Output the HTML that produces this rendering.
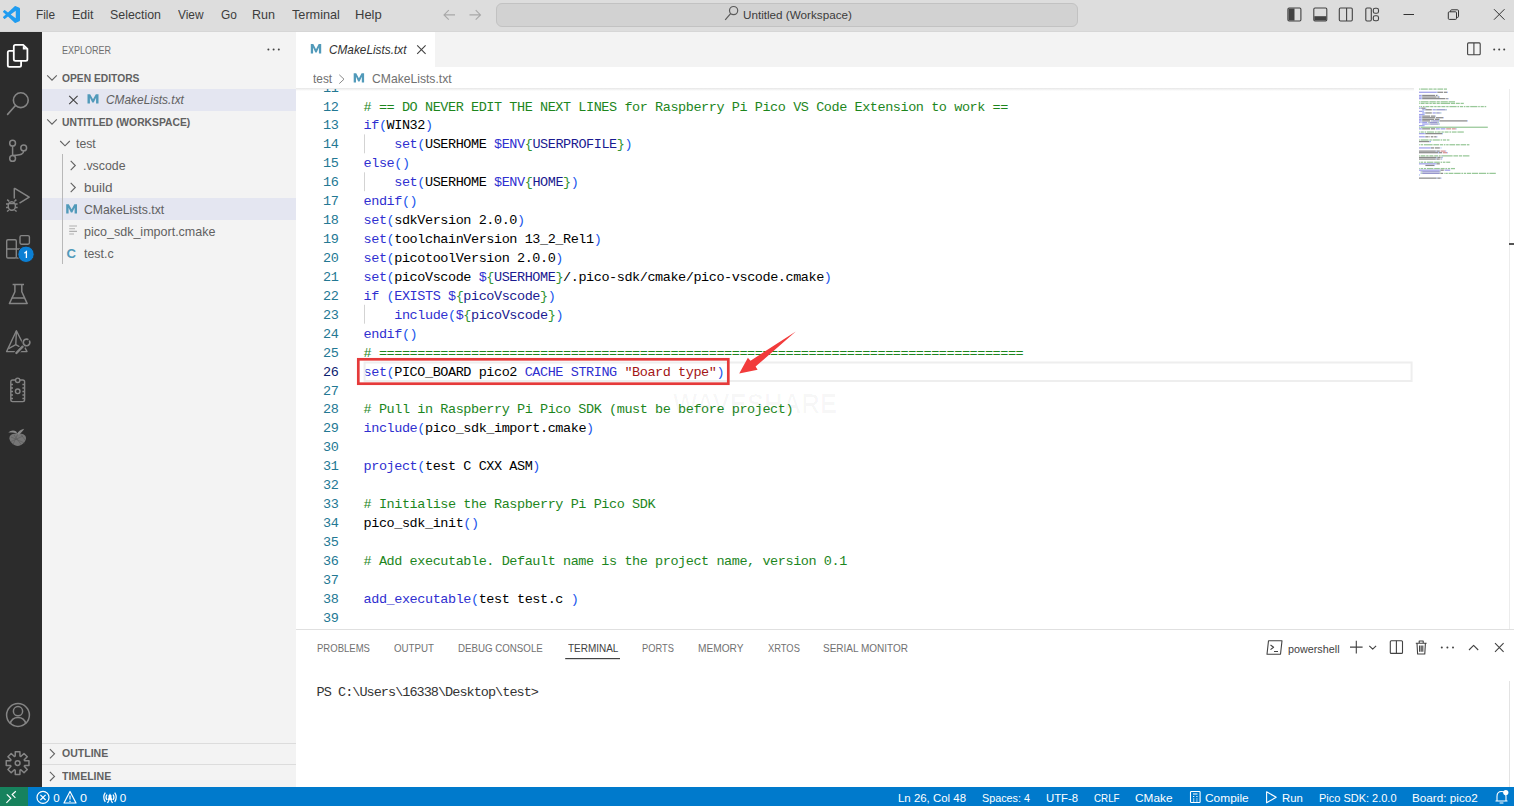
<!DOCTYPE html>
<html><head><meta charset="utf-8"><style>
*{margin:0;padding:0;box-sizing:border-box}
html,body{width:1514px;height:806px;overflow:hidden;background:#fff}
body{position:relative;font-family:"Liberation Sans",sans-serif}
.a{position:absolute}
.t{position:absolute;white-space:pre;line-height:1;transform-origin:0 0;font-family:"Liberation Sans",sans-serif}
.m{position:absolute;white-space:pre;line-height:1;font-family:"Liberation Mono",monospace;color:#000}
svg{position:absolute;overflow:visible}
</style></head>
<body>

<div class="a" style="left:0;top:0;width:1514px;height:32px;background:#dddddd"></div>
<div class="a" style="left:0;top:31px;width:1514px;height:1px;background:#d6d6d6"></div>
<div class="a" style="left:495.5px;top:2.5px;width:582px;height:24px;background:#d2d2d2;border:1px solid #c2c2c2;border-radius:6px"></div>
<div class="a" style="left:0;top:32px;width:42px;height:755px;background:#2c2c2c"></div>
<div class="a" style="left:42px;top:32px;width:254px;height:755px;background:#f3f3f3"></div>
<div class="a" style="left:42px;top:89px;width:254px;height:22px;background:#e4e6f1"></div>
<div class="a" style="left:42px;top:198px;width:254px;height:22px;background:#e4e6f1"></div>
<div class="a" style="left:62px;top:154px;width:1px;height:110px;background:#b8b8b8"></div>
<div class="a" style="left:42px;top:743px;width:254px;height:1px;background:#dcdcdc"></div>
<div class="a" style="left:42px;top:764px;width:254px;height:1px;background:#dcdcdc"></div>
<div class="a" style="left:296px;top:32px;width:1218px;height:35px;background:#f3f3f3"></div>
<div class="a" style="left:296px;top:32px;width:139px;height:35px;background:#ffffff"></div>
<div class="a" style="left:296px;top:67px;width:1218px;height:22px;background:#ffffff"></div>
<div class="a" style="left:296px;top:88px;width:1118px;height:3px;background:linear-gradient(#e6e6e6,#ffffff)"></div>
<div class="a" style="left:296px;top:629px;width:1218px;height:1px;background:#e0e0e0"></div>
<div class="a" style="left:0;top:787px;width:1514px;height:19px;background:#007acc"></div>
<div class="a" style="left:0;top:787px;width:28px;height:19px;background:#16825d"></div>
<div class="a" style="left:296px;top:89px;width:1218px;height:540px;overflow:hidden"><div class="a" style="left:-296px;top:-89px;width:1514px;height:806px"><div class="m" style="left:323.06px;top:81.62px;font-size:13.5px;letter-spacing:-0.431px;color:#237893">11</div>
<div class="m" style="left:323.06px;top:100.55px;font-size:13.5px;letter-spacing:-0.431px;color:#237893">12</div>
<div class="m" style="left:363.60px;top:100.55px;font-size:13.5px;letter-spacing:-0.431px"><span style="color:#1d861d"># == DO NEVER EDIT THE NEXT LINES for Raspberry Pi Pico VS Code Extension to work ==</span></div>
<div class="m" style="left:323.06px;top:119.48px;font-size:13.5px;letter-spacing:-0.431px;color:#237893">13</div>
<div class="m" style="left:363.60px;top:119.48px;font-size:13.5px;letter-spacing:-0.431px"><span style="color:#2f2fd0">if</span><span style="color:#2457ec">(</span><span style="color:#000000">WIN32</span><span style="color:#2457ec">)</span></div>
<div class="m" style="left:323.06px;top:138.41px;font-size:13.5px;letter-spacing:-0.431px;color:#237893">14</div>
<div class="m" style="left:363.60px;top:138.41px;font-size:13.5px;letter-spacing:-0.431px"><span style="color:#000000">    </span><span style="color:#2f2fd0">set</span><span style="color:#2457ec">(</span><span style="color:#000000">USERHOME </span><span style="color:#2f2fd0">$ENV</span><span style="color:#319331">{</span><span style="color:#1a1a90">USERPROFILE</span><span style="color:#319331">}</span><span style="color:#2457ec">)</span></div>
<div class="m" style="left:323.06px;top:157.34px;font-size:13.5px;letter-spacing:-0.431px;color:#237893">15</div>
<div class="m" style="left:363.60px;top:157.34px;font-size:13.5px;letter-spacing:-0.431px"><span style="color:#2f2fd0">else</span><span style="color:#2457ec">()</span></div>
<div class="m" style="left:323.06px;top:176.27px;font-size:13.5px;letter-spacing:-0.431px;color:#237893">16</div>
<div class="m" style="left:363.60px;top:176.27px;font-size:13.5px;letter-spacing:-0.431px"><span style="color:#000000">    </span><span style="color:#2f2fd0">set</span><span style="color:#2457ec">(</span><span style="color:#000000">USERHOME </span><span style="color:#2f2fd0">$ENV</span><span style="color:#319331">{</span><span style="color:#1a1a90">HOME</span><span style="color:#319331">}</span><span style="color:#2457ec">)</span></div>
<div class="m" style="left:323.06px;top:195.20px;font-size:13.5px;letter-spacing:-0.431px;color:#237893">17</div>
<div class="m" style="left:363.60px;top:195.20px;font-size:13.5px;letter-spacing:-0.431px"><span style="color:#2f2fd0">endif</span><span style="color:#2457ec">()</span></div>
<div class="m" style="left:323.06px;top:214.13px;font-size:13.5px;letter-spacing:-0.431px;color:#237893">18</div>
<div class="m" style="left:363.60px;top:214.13px;font-size:13.5px;letter-spacing:-0.431px"><span style="color:#2f2fd0">set</span><span style="color:#2457ec">(</span><span style="color:#000000">sdkVersion 2.0.0</span><span style="color:#2457ec">)</span></div>
<div class="m" style="left:323.06px;top:233.06px;font-size:13.5px;letter-spacing:-0.431px;color:#237893">19</div>
<div class="m" style="left:363.60px;top:233.06px;font-size:13.5px;letter-spacing:-0.431px"><span style="color:#2f2fd0">set</span><span style="color:#2457ec">(</span><span style="color:#000000">toolchainVersion 13_2_Rel1</span><span style="color:#2457ec">)</span></div>
<div class="m" style="left:323.06px;top:251.99px;font-size:13.5px;letter-spacing:-0.431px;color:#237893">20</div>
<div class="m" style="left:363.60px;top:251.99px;font-size:13.5px;letter-spacing:-0.431px"><span style="color:#2f2fd0">set</span><span style="color:#2457ec">(</span><span style="color:#000000">picotoolVersion 2.0.0</span><span style="color:#2457ec">)</span></div>
<div class="m" style="left:323.06px;top:270.92px;font-size:13.5px;letter-spacing:-0.431px;color:#237893">21</div>
<div class="m" style="left:363.60px;top:270.92px;font-size:13.5px;letter-spacing:-0.431px"><span style="color:#2f2fd0">set</span><span style="color:#2457ec">(</span><span style="color:#000000">picoVscode </span><span style="color:#2f2fd0">$</span><span style="color:#319331">{</span><span style="color:#1a1a90">USERHOME</span><span style="color:#319331">}</span><span style="color:#000000">/.pico-sdk/cmake/pico-vscode.cmake</span><span style="color:#2457ec">)</span></div>
<div class="m" style="left:323.06px;top:289.85px;font-size:13.5px;letter-spacing:-0.431px;color:#237893">22</div>
<div class="m" style="left:363.60px;top:289.85px;font-size:13.5px;letter-spacing:-0.431px"><span style="color:#2f2fd0">if </span><span style="color:#2457ec">(</span><span style="color:#2f2fd0">EXISTS </span><span style="color:#2f2fd0">$</span><span style="color:#319331">{</span><span style="color:#1a1a90">picoVscode</span><span style="color:#319331">}</span><span style="color:#2457ec">)</span></div>
<div class="m" style="left:323.06px;top:308.78px;font-size:13.5px;letter-spacing:-0.431px;color:#237893">23</div>
<div class="m" style="left:363.60px;top:308.78px;font-size:13.5px;letter-spacing:-0.431px"><span style="color:#000000">    </span><span style="color:#2f2fd0">include</span><span style="color:#2457ec">(</span><span style="color:#2f2fd0">$</span><span style="color:#319331">{</span><span style="color:#1a1a90">picoVscode</span><span style="color:#319331">}</span><span style="color:#2457ec">)</span></div>
<div class="m" style="left:323.06px;top:327.71px;font-size:13.5px;letter-spacing:-0.431px;color:#237893">24</div>
<div class="m" style="left:363.60px;top:327.71px;font-size:13.5px;letter-spacing:-0.431px"><span style="color:#2f2fd0">endif</span><span style="color:#2457ec">()</span></div>
<div class="m" style="left:323.06px;top:346.64px;font-size:13.5px;letter-spacing:-0.431px;color:#237893">25</div>
<div class="m" style="left:363.60px;top:346.64px;font-size:13.5px;letter-spacing:-0.431px"><span style="color:#1d861d"># ====================================================================================</span></div>
<div class="m" style="left:323.06px;top:365.57px;font-size:13.5px;letter-spacing:-0.431px;color:#0b216f">26</div>
<div class="m" style="left:363.60px;top:365.57px;font-size:13.5px;letter-spacing:-0.431px"><span style="color:#2f2fd0">set</span><span style="color:#2457ec">(</span><span style="color:#000000">PICO_BOARD pico2 </span><span style="color:#2f2fd0">CACHE STRING </span><span style="color:#a31515">&quot;Board type&quot;</span><span style="color:#2457ec">)</span></div>
<div class="m" style="left:323.06px;top:384.50px;font-size:13.5px;letter-spacing:-0.431px;color:#237893">27</div>
<div class="m" style="left:323.06px;top:403.43px;font-size:13.5px;letter-spacing:-0.431px;color:#237893">28</div>
<div class="m" style="left:363.60px;top:403.43px;font-size:13.5px;letter-spacing:-0.431px"><span style="color:#1d861d"># Pull in Raspberry Pi Pico SDK (must be before project)</span></div>
<div class="m" style="left:323.06px;top:422.36px;font-size:13.5px;letter-spacing:-0.431px;color:#237893">29</div>
<div class="m" style="left:363.60px;top:422.36px;font-size:13.5px;letter-spacing:-0.431px"><span style="color:#2f2fd0">include</span><span style="color:#2457ec">(</span><span style="color:#000000">pico_sdk_import.cmake</span><span style="color:#2457ec">)</span></div>
<div class="m" style="left:323.06px;top:441.29px;font-size:13.5px;letter-spacing:-0.431px;color:#237893">30</div>
<div class="m" style="left:323.06px;top:460.22px;font-size:13.5px;letter-spacing:-0.431px;color:#237893">31</div>
<div class="m" style="left:363.60px;top:460.22px;font-size:13.5px;letter-spacing:-0.431px"><span style="color:#2f2fd0">project</span><span style="color:#2457ec">(</span><span style="color:#000000">test C CXX ASM</span><span style="color:#2457ec">)</span></div>
<div class="m" style="left:323.06px;top:479.15px;font-size:13.5px;letter-spacing:-0.431px;color:#237893">32</div>
<div class="m" style="left:323.06px;top:498.08px;font-size:13.5px;letter-spacing:-0.431px;color:#237893">33</div>
<div class="m" style="left:363.60px;top:498.08px;font-size:13.5px;letter-spacing:-0.431px"><span style="color:#1d861d"># Initialise the Raspberry Pi Pico SDK</span></div>
<div class="m" style="left:323.06px;top:517.01px;font-size:13.5px;letter-spacing:-0.431px;color:#237893">34</div>
<div class="m" style="left:363.60px;top:517.01px;font-size:13.5px;letter-spacing:-0.431px"><span style="color:#000000">pico_sdk_init</span><span style="color:#2457ec">()</span></div>
<div class="m" style="left:323.06px;top:535.94px;font-size:13.5px;letter-spacing:-0.431px;color:#237893">35</div>
<div class="m" style="left:323.06px;top:554.87px;font-size:13.5px;letter-spacing:-0.431px;color:#237893">36</div>
<div class="m" style="left:363.60px;top:554.87px;font-size:13.5px;letter-spacing:-0.431px"><span style="color:#1d861d"># Add executable. Default name is the project name, version 0.1</span></div>
<div class="m" style="left:323.06px;top:573.80px;font-size:13.5px;letter-spacing:-0.431px;color:#237893">37</div>
<div class="m" style="left:323.06px;top:592.73px;font-size:13.5px;letter-spacing:-0.431px;color:#237893">38</div>
<div class="m" style="left:363.60px;top:592.73px;font-size:13.5px;letter-spacing:-0.431px"><span style="color:#2f2fd0">add_executable</span><span style="color:#2457ec">(</span><span style="color:#000000">test test.c </span><span style="color:#2457ec">)</span></div>
<div class="m" style="left:323.06px;top:611.66px;font-size:13.5px;letter-spacing:-0.431px;color:#237893">39</div></div></div><div class="m" style="left:316.6px;top:685.55px;font-size:13.5px;letter-spacing:-0.961px;color:#333">PS C:\Users\16338\Desktop\test&gt;</div><span class="t" style="left:36.36px;top:8.53px;font-size:12.6px;color:#3c3c3c;font-weight:normal;font-style:normal;transform:scaleX(0.9384)">File</span>
<span class="t" style="left:71.51px;top:8.53px;font-size:12.6px;color:#3c3c3c;font-weight:normal;font-style:normal;transform:scaleX(0.9858)">Edit</span>
<span class="t" style="left:109.90px;top:8.53px;font-size:12.6px;color:#3c3c3c;font-weight:normal;font-style:normal;transform:scaleX(0.9826)">Selection</span>
<span class="t" style="left:177.70px;top:8.53px;font-size:12.6px;color:#3c3c3c;font-weight:normal;font-style:normal;transform:scaleX(0.9437)">View</span>
<span class="t" style="left:220.70px;top:8.53px;font-size:12.6px;color:#3c3c3c;font-weight:normal;font-style:normal;transform:scaleX(0.9467)">Go</span>
<span class="t" style="left:252.30px;top:8.53px;font-size:12.6px;color:#3c3c3c;font-weight:normal;font-style:normal;transform:scaleX(0.9955)">Run</span>
<span class="t" style="left:292.20px;top:8.53px;font-size:12.6px;color:#3c3c3c;font-weight:normal;font-style:normal;transform:scaleX(1.0066)">Terminal</span>
<span class="t" style="left:354.57px;top:8.53px;font-size:12.6px;color:#3c3c3c;font-weight:normal;font-style:normal;transform:scaleX(1.0323)">Help</span>
<span class="t" style="left:743.40px;top:8.58px;font-size:11.6px;color:#3c3c3c;font-weight:normal;font-style:normal;transform:scaleX(1.0077)">Untitled (Workspace)</span>
<span class="t" style="left:61.80px;top:44.66px;font-size:10.8px;color:#6f6f6f;font-weight:normal;font-style:normal;transform:scaleX(0.8355)">EXPLORER</span>
<span class="t" style="left:61.80px;top:72.86px;font-size:10.8px;color:#616161;font-weight:bold;font-style:normal;transform:scaleX(0.9508)">OPEN EDITORS</span>
<span class="t" style="left:105.80px;top:94.27px;font-size:12.2px;color:#616161;font-weight:normal;font-style:italic;transform:scaleX(0.9748)">CMakeLists.txt</span>
<span class="t" style="left:61.80px;top:116.86px;font-size:10.8px;color:#616161;font-weight:bold;font-style:normal;transform:scaleX(0.9565)">UNTITLED (WORKSPACE)</span>
<span class="t" style="left:75.90px;top:137.87px;font-size:12.2px;color:#616161;font-weight:normal;font-style:normal;transform:scaleX(1.0021)">test</span>
<span class="t" style="left:82.69px;top:159.87px;font-size:12.2px;color:#616161;font-weight:normal;font-style:normal;transform:scaleX(1.0116)">.vscode</span>
<span class="t" style="left:83.70px;top:181.87px;font-size:12.2px;color:#616161;font-weight:normal;font-style:normal;transform:scaleX(1.1133)">build</span>
<span class="t" style="left:83.70px;top:203.87px;font-size:12.2px;color:#616161;font-weight:normal;font-style:normal;transform:scaleX(1.0034)">CMakeLists.txt</span>
<span class="t" style="left:83.70px;top:225.87px;font-size:12.2px;color:#616161;font-weight:normal;font-style:normal;transform:scaleX(1.0269)">pico_sdk_import.cmake</span>
<span class="t" style="left:83.70px;top:247.87px;font-size:12.2px;color:#616161;font-weight:normal;font-style:normal;transform:scaleX(1.0162)">test.c</span>
<span class="t" style="left:62.00px;top:748.46px;font-size:10.8px;color:#616161;font-weight:bold;font-style:normal;transform:scaleX(0.9749)">OUTLINE</span>
<span class="t" style="left:62.00px;top:771.06px;font-size:10.8px;color:#616161;font-weight:bold;font-style:normal;transform:scaleX(0.9764)">TIMELINE</span>
<span class="t" style="left:328.80px;top:44.27px;font-size:12.2px;color:#333333;font-weight:normal;font-style:italic;transform:scaleX(0.9686)">CMakeLists.txt</span>
<span class="t" style="left:313.00px;top:73.07px;font-size:12.2px;color:#717171;font-weight:normal;font-style:normal;transform:scaleX(0.9725)">test</span>
<span class="t" style="left:371.60px;top:73.07px;font-size:12.2px;color:#717171;font-weight:normal;font-style:normal;transform:scaleX(0.9959)">CMakeLists.txt</span>
<span class="t" style="left:316.70px;top:642.66px;font-size:10.8px;color:#717171;font-weight:normal;font-style:normal;transform:scaleX(0.8830)">PROBLEMS</span>
<span class="t" style="left:393.90px;top:642.66px;font-size:10.8px;color:#717171;font-weight:normal;font-style:normal;transform:scaleX(0.9020)">OUTPUT</span>
<span class="t" style="left:458.40px;top:642.66px;font-size:10.8px;color:#717171;font-weight:normal;font-style:normal;transform:scaleX(0.9001)">DEBUG CONSOLE</span>
<span class="t" style="left:567.80px;top:642.66px;font-size:10.8px;color:#424242;font-weight:normal;font-style:normal;transform:scaleX(0.9233)">TERMINAL</span>
<span class="t" style="left:642.30px;top:642.66px;font-size:10.8px;color:#717171;font-weight:normal;font-style:normal;transform:scaleX(0.8615)">PORTS</span>
<span class="t" style="left:698.40px;top:642.66px;font-size:10.8px;color:#717171;font-weight:normal;font-style:normal;transform:scaleX(0.9400)">MEMORY</span>
<span class="t" style="left:767.50px;top:642.66px;font-size:10.8px;color:#717171;font-weight:normal;font-style:normal;transform:scaleX(0.8661)">XRTOS</span>
<span class="t" style="left:823.00px;top:642.66px;font-size:10.8px;color:#717171;font-weight:normal;font-style:normal;transform:scaleX(0.9265)">SERIAL MONITOR</span>
<span class="t" style="left:673.20px;top:389.27px;font-size:28.5px;color:rgba(0,0,0,0.028);font-weight:bold;font-style:normal;transform:scaleX(0.9038)">WAVESHARE</span>
<span class="t" style="left:1287.60px;top:643.38px;font-size:11.6px;color:#424242;font-weight:normal;font-style:normal;transform:scaleX(0.9299)">powershell</span>
<span class="t" style="left:53.20px;top:791.68px;font-size:11.6px;color:#ffffff;font-weight:normal;font-style:normal;transform:scaleX(1.0000)">0</span>
<span class="t" style="left:80.00px;top:791.68px;font-size:11.6px;color:#ffffff;font-weight:normal;font-style:normal;transform:scaleX(1.0833)">0</span>
<span class="t" style="left:119.80px;top:791.68px;font-size:11.6px;color:#ffffff;font-weight:normal;font-style:normal;transform:scaleX(1.0000)">0</span>
<span class="t" style="left:898.00px;top:791.68px;font-size:11.6px;color:#ffffff;font-weight:normal;font-style:normal;transform:scaleX(0.9866)">Ln 26, Col 48</span>
<span class="t" style="left:981.50px;top:791.68px;font-size:11.6px;color:#ffffff;font-weight:normal;font-style:normal;transform:scaleX(0.9307)">Spaces: 4</span>
<span class="t" style="left:1046.00px;top:791.68px;font-size:11.6px;color:#ffffff;font-weight:normal;font-style:normal;transform:scaleX(0.9785)">UTF-8</span>
<span class="t" style="left:1093.50px;top:791.68px;font-size:11.6px;color:#ffffff;font-weight:normal;font-style:normal;transform:scaleX(0.8446)">CRLF</span>
<span class="t" style="left:1134.80px;top:791.68px;font-size:11.6px;color:#ffffff;font-weight:normal;font-style:normal;transform:scaleX(1.0200)">CMake</span>
<span class="t" style="left:1205.00px;top:791.68px;font-size:11.6px;color:#ffffff;font-weight:normal;font-style:normal;transform:scaleX(1.0267)">Compile</span>
<span class="t" style="left:1282.00px;top:791.68px;font-size:11.6px;color:#ffffff;font-weight:normal;font-style:normal;transform:scaleX(0.9798)">Run</span>
<span class="t" style="left:1318.50px;top:791.68px;font-size:11.6px;color:#ffffff;font-weight:normal;font-style:normal;transform:scaleX(0.9473)">Pico SDK: 2.0.0</span>
<span class="t" style="left:1411.60px;top:791.68px;font-size:11.6px;color:#ffffff;font-weight:normal;font-style:normal;transform:scaleX(1.0116)">Board: pico2</span><svg style="left:0;top:0" width="1514" height="806"><g opacity="0.45"><rect x="1419.00" y="88.47" width="0.80" height="1.25" fill="#1d861d"/><rect x="1420.60" y="88.47" width="7.20" height="1.25" fill="#1d861d"/><rect x="1428.60" y="88.47" width="4.00" height="1.25" fill="#1d861d"/><rect x="1433.40" y="88.47" width="3.20" height="1.25" fill="#1d861d"/><rect x="1437.40" y="88.47" width="5.60" height="1.25" fill="#1d861d"/><rect x="1443.80" y="88.47" width="3.20" height="1.25" fill="#1d861d"/><rect x="1419.00" y="91.66" width="17.60" height="1.25" fill="#2f2fd0"/><rect x="1436.60" y="91.66" width="0.80" height="1.25" fill="#2457ec"/><rect x="1437.40" y="91.66" width="5.60" height="1.25" fill="#000000"/><rect x="1443.80" y="91.66" width="3.20" height="1.25" fill="#000000"/><rect x="1447.00" y="91.66" width="0.80" height="1.25" fill="#2457ec"/><rect x="1419.00" y="94.83" width="2.40" height="1.25" fill="#2f2fd0"/><rect x="1421.40" y="94.83" width="0.80" height="1.25" fill="#2457ec"/><rect x="1422.20" y="94.83" width="12.80" height="1.25" fill="#000000"/><rect x="1435.80" y="94.83" width="1.60" height="1.25" fill="#000000"/><rect x="1437.40" y="94.83" width="0.80" height="1.25" fill="#2457ec"/><rect x="1419.00" y="96.42" width="2.40" height="1.25" fill="#2f2fd0"/><rect x="1421.40" y="96.42" width="0.80" height="1.25" fill="#2457ec"/><rect x="1422.20" y="96.42" width="14.40" height="1.25" fill="#000000"/><rect x="1437.40" y="96.42" width="1.60" height="1.25" fill="#000000"/><rect x="1439.00" y="96.42" width="0.80" height="1.25" fill="#2457ec"/><rect x="1419.00" y="98.02" width="2.40" height="1.25" fill="#2f2fd0"/><rect x="1421.40" y="98.02" width="0.80" height="1.25" fill="#2457ec"/><rect x="1422.20" y="98.02" width="23.20" height="1.25" fill="#000000"/><rect x="1446.20" y="98.02" width="1.60" height="1.25" fill="#000000"/><rect x="1447.80" y="98.02" width="0.80" height="1.25" fill="#2457ec"/><rect x="1419.00" y="101.19" width="0.80" height="1.25" fill="#1d861d"/><rect x="1420.60" y="101.19" width="8.00" height="1.25" fill="#1d861d"/><rect x="1429.40" y="101.19" width="6.40" height="1.25" fill="#1d861d"/><rect x="1436.60" y="101.19" width="3.20" height="1.25" fill="#1d861d"/><rect x="1440.60" y="101.19" width="7.20" height="1.25" fill="#1d861d"/><rect x="1448.60" y="101.19" width="6.40" height="1.25" fill="#1d861d"/><rect x="1419.00" y="102.78" width="0.80" height="1.25" fill="#1d861d"/><rect x="1420.60" y="102.78" width="4.00" height="1.25" fill="#1d861d"/><rect x="1425.40" y="102.78" width="3.20" height="1.25" fill="#1d861d"/><rect x="1429.40" y="102.78" width="2.40" height="1.25" fill="#1d861d"/><rect x="1432.60" y="102.78" width="3.20" height="1.25" fill="#1d861d"/><rect x="1436.60" y="102.78" width="3.20" height="1.25" fill="#1d861d"/><rect x="1440.60" y="102.78" width="9.60" height="1.25" fill="#1d861d"/><rect x="1451.00" y="102.78" width="4.00" height="1.25" fill="#1d861d"/><rect x="1455.80" y="102.78" width="4.00" height="1.25" fill="#1d861d"/><rect x="1460.60" y="102.78" width="3.20" height="1.25" fill="#1d861d"/><rect x="1419.00" y="105.97" width="0.80" height="1.25" fill="#1d861d"/><rect x="1420.60" y="105.97" width="1.60" height="1.25" fill="#1d861d"/><rect x="1423.00" y="105.97" width="1.60" height="1.25" fill="#1d861d"/><rect x="1425.40" y="105.97" width="4.00" height="1.25" fill="#1d861d"/><rect x="1430.20" y="105.97" width="3.20" height="1.25" fill="#1d861d"/><rect x="1434.20" y="105.97" width="2.40" height="1.25" fill="#1d861d"/><rect x="1437.40" y="105.97" width="3.20" height="1.25" fill="#1d861d"/><rect x="1441.40" y="105.97" width="4.00" height="1.25" fill="#1d861d"/><rect x="1446.20" y="105.97" width="2.40" height="1.25" fill="#1d861d"/><rect x="1449.40" y="105.97" width="7.20" height="1.25" fill="#1d861d"/><rect x="1457.40" y="105.97" width="1.60" height="1.25" fill="#1d861d"/><rect x="1459.80" y="105.97" width="3.20" height="1.25" fill="#1d861d"/><rect x="1463.80" y="105.97" width="1.60" height="1.25" fill="#1d861d"/><rect x="1466.20" y="105.97" width="3.20" height="1.25" fill="#1d861d"/><rect x="1470.20" y="105.97" width="7.20" height="1.25" fill="#1d861d"/><rect x="1478.20" y="105.97" width="1.60" height="1.25" fill="#1d861d"/><rect x="1480.60" y="105.97" width="3.20" height="1.25" fill="#1d861d"/><rect x="1484.60" y="105.97" width="1.60" height="1.25" fill="#1d861d"/><rect x="1419.00" y="107.55" width="1.60" height="1.25" fill="#2f2fd0"/><rect x="1420.60" y="107.55" width="0.80" height="1.25" fill="#2457ec"/><rect x="1421.40" y="107.55" width="4.00" height="1.25" fill="#000000"/><rect x="1425.40" y="107.55" width="0.80" height="1.25" fill="#2457ec"/><rect x="1422.20" y="109.14" width="2.40" height="1.25" fill="#2f2fd0"/><rect x="1424.60" y="109.14" width="0.80" height="1.25" fill="#2457ec"/><rect x="1425.40" y="109.14" width="6.40" height="1.25" fill="#000000"/><rect x="1432.60" y="109.14" width="3.20" height="1.25" fill="#2f2fd0"/><rect x="1435.80" y="109.14" width="0.80" height="1.25" fill="#319331"/><rect x="1436.60" y="109.14" width="8.80" height="1.25" fill="#1a1a90"/><rect x="1445.40" y="109.14" width="0.80" height="1.25" fill="#319331"/><rect x="1446.20" y="109.14" width="0.80" height="1.25" fill="#2457ec"/><rect x="1419.00" y="110.73" width="3.20" height="1.25" fill="#2f2fd0"/><rect x="1422.20" y="110.73" width="1.60" height="1.25" fill="#2457ec"/><rect x="1422.20" y="112.32" width="2.40" height="1.25" fill="#2f2fd0"/><rect x="1424.60" y="112.32" width="0.80" height="1.25" fill="#2457ec"/><rect x="1425.40" y="112.32" width="6.40" height="1.25" fill="#000000"/><rect x="1432.60" y="112.32" width="3.20" height="1.25" fill="#2f2fd0"/><rect x="1435.80" y="112.32" width="0.80" height="1.25" fill="#319331"/><rect x="1436.60" y="112.32" width="3.20" height="1.25" fill="#1a1a90"/><rect x="1439.80" y="112.32" width="0.80" height="1.25" fill="#319331"/><rect x="1440.60" y="112.32" width="0.80" height="1.25" fill="#2457ec"/><rect x="1419.00" y="113.91" width="4.00" height="1.25" fill="#2f2fd0"/><rect x="1423.00" y="113.91" width="1.60" height="1.25" fill="#2457ec"/><rect x="1419.00" y="115.50" width="2.40" height="1.25" fill="#2f2fd0"/><rect x="1421.40" y="115.50" width="0.80" height="1.25" fill="#2457ec"/><rect x="1422.20" y="115.50" width="8.00" height="1.25" fill="#000000"/><rect x="1431.00" y="115.50" width="4.00" height="1.25" fill="#000000"/><rect x="1435.00" y="115.50" width="0.80" height="1.25" fill="#2457ec"/><rect x="1419.00" y="117.09" width="2.40" height="1.25" fill="#2f2fd0"/><rect x="1421.40" y="117.09" width="0.80" height="1.25" fill="#2457ec"/><rect x="1422.20" y="117.09" width="12.80" height="1.25" fill="#000000"/><rect x="1435.80" y="117.09" width="7.20" height="1.25" fill="#000000"/><rect x="1443.00" y="117.09" width="0.80" height="1.25" fill="#2457ec"/><rect x="1419.00" y="118.69" width="2.40" height="1.25" fill="#2f2fd0"/><rect x="1421.40" y="118.69" width="0.80" height="1.25" fill="#2457ec"/><rect x="1422.20" y="118.69" width="12.00" height="1.25" fill="#000000"/><rect x="1435.00" y="118.69" width="4.00" height="1.25" fill="#000000"/><rect x="1439.00" y="118.69" width="0.80" height="1.25" fill="#2457ec"/><rect x="1419.00" y="120.27" width="2.40" height="1.25" fill="#2f2fd0"/><rect x="1421.40" y="120.27" width="0.80" height="1.25" fill="#2457ec"/><rect x="1422.20" y="120.27" width="8.00" height="1.25" fill="#000000"/><rect x="1431.00" y="120.27" width="0.80" height="1.25" fill="#2f2fd0"/><rect x="1431.80" y="120.27" width="0.80" height="1.25" fill="#319331"/><rect x="1432.60" y="120.27" width="6.40" height="1.25" fill="#1a1a90"/><rect x="1439.00" y="120.27" width="0.80" height="1.25" fill="#319331"/><rect x="1439.80" y="120.27" width="27.20" height="1.25" fill="#000000"/><rect x="1467.00" y="120.27" width="0.80" height="1.25" fill="#2457ec"/><rect x="1419.00" y="121.86" width="1.60" height="1.25" fill="#2f2fd0"/><rect x="1421.40" y="121.86" width="0.80" height="1.25" fill="#2457ec"/><rect x="1422.20" y="121.86" width="4.80" height="1.25" fill="#2f2fd0"/><rect x="1427.80" y="121.86" width="0.80" height="1.25" fill="#2f2fd0"/><rect x="1428.60" y="121.86" width="0.80" height="1.25" fill="#319331"/><rect x="1429.40" y="121.86" width="8.00" height="1.25" fill="#1a1a90"/><rect x="1437.40" y="121.86" width="0.80" height="1.25" fill="#319331"/><rect x="1438.20" y="121.86" width="0.80" height="1.25" fill="#2457ec"/><rect x="1422.20" y="123.45" width="5.60" height="1.25" fill="#2f2fd0"/><rect x="1427.80" y="123.45" width="0.80" height="1.25" fill="#2457ec"/><rect x="1428.60" y="123.45" width="0.80" height="1.25" fill="#2f2fd0"/><rect x="1429.40" y="123.45" width="0.80" height="1.25" fill="#319331"/><rect x="1430.20" y="123.45" width="8.00" height="1.25" fill="#1a1a90"/><rect x="1438.20" y="123.45" width="0.80" height="1.25" fill="#319331"/><rect x="1439.00" y="123.45" width="0.80" height="1.25" fill="#2457ec"/><rect x="1419.00" y="125.04" width="4.00" height="1.25" fill="#2f2fd0"/><rect x="1423.00" y="125.04" width="1.60" height="1.25" fill="#2457ec"/><rect x="1419.00" y="126.63" width="0.80" height="1.25" fill="#1d861d"/><rect x="1420.60" y="126.63" width="67.20" height="1.25" fill="#1d861d"/><rect x="1419.00" y="128.22" width="2.40" height="1.25" fill="#2f2fd0"/><rect x="1421.40" y="128.22" width="0.80" height="1.25" fill="#2457ec"/><rect x="1422.20" y="128.22" width="8.00" height="1.25" fill="#000000"/><rect x="1431.00" y="128.22" width="4.00" height="1.25" fill="#000000"/><rect x="1435.80" y="128.22" width="4.00" height="1.25" fill="#2f2fd0"/><rect x="1440.60" y="128.22" width="4.80" height="1.25" fill="#2f2fd0"/><rect x="1446.20" y="128.22" width="4.80" height="1.25" fill="#a31515"/><rect x="1451.80" y="128.22" width="4.00" height="1.25" fill="#a31515"/><rect x="1455.80" y="128.22" width="0.80" height="1.25" fill="#2457ec"/><rect x="1419.00" y="131.41" width="0.80" height="1.25" fill="#1d861d"/><rect x="1420.60" y="131.41" width="3.20" height="1.25" fill="#1d861d"/><rect x="1424.60" y="131.41" width="1.60" height="1.25" fill="#1d861d"/><rect x="1427.00" y="131.41" width="7.20" height="1.25" fill="#1d861d"/><rect x="1435.00" y="131.41" width="1.60" height="1.25" fill="#1d861d"/><rect x="1437.40" y="131.41" width="3.20" height="1.25" fill="#1d861d"/><rect x="1441.40" y="131.41" width="2.40" height="1.25" fill="#1d861d"/><rect x="1444.60" y="131.41" width="4.00" height="1.25" fill="#1d861d"/><rect x="1449.40" y="131.41" width="1.60" height="1.25" fill="#1d861d"/><rect x="1451.80" y="131.41" width="4.80" height="1.25" fill="#1d861d"/><rect x="1457.40" y="131.41" width="6.40" height="1.25" fill="#1d861d"/><rect x="1419.00" y="133.00" width="5.60" height="1.25" fill="#2f2fd0"/><rect x="1424.60" y="133.00" width="0.80" height="1.25" fill="#2457ec"/><rect x="1425.40" y="133.00" width="16.80" height="1.25" fill="#000000"/><rect x="1442.20" y="133.00" width="0.80" height="1.25" fill="#2457ec"/><rect x="1419.00" y="136.18" width="5.60" height="1.25" fill="#2f2fd0"/><rect x="1424.60" y="136.18" width="0.80" height="1.25" fill="#2457ec"/><rect x="1425.40" y="136.18" width="3.20" height="1.25" fill="#000000"/><rect x="1429.40" y="136.18" width="0.80" height="1.25" fill="#000000"/><rect x="1431.00" y="136.18" width="2.40" height="1.25" fill="#000000"/><rect x="1434.20" y="136.18" width="2.40" height="1.25" fill="#000000"/><rect x="1436.60" y="136.18" width="0.80" height="1.25" fill="#2457ec"/><rect x="1419.00" y="139.35" width="0.80" height="1.25" fill="#1d861d"/><rect x="1420.60" y="139.35" width="8.00" height="1.25" fill="#1d861d"/><rect x="1429.40" y="139.35" width="2.40" height="1.25" fill="#1d861d"/><rect x="1432.60" y="139.35" width="7.20" height="1.25" fill="#1d861d"/><rect x="1440.60" y="139.35" width="1.60" height="1.25" fill="#1d861d"/><rect x="1443.00" y="139.35" width="3.20" height="1.25" fill="#1d861d"/><rect x="1447.00" y="139.35" width="2.40" height="1.25" fill="#1d861d"/><rect x="1419.00" y="140.94" width="10.40" height="1.25" fill="#000000"/><rect x="1429.40" y="140.94" width="1.60" height="1.25" fill="#2457ec"/><rect x="1419.00" y="144.12" width="0.80" height="1.25" fill="#1d861d"/><rect x="1420.60" y="144.12" width="2.40" height="1.25" fill="#1d861d"/><rect x="1423.80" y="144.12" width="8.80" height="1.25" fill="#1d861d"/><rect x="1433.40" y="144.12" width="5.60" height="1.25" fill="#1d861d"/><rect x="1439.80" y="144.12" width="3.20" height="1.25" fill="#1d861d"/><rect x="1443.80" y="144.12" width="1.60" height="1.25" fill="#1d861d"/><rect x="1446.20" y="144.12" width="2.40" height="1.25" fill="#1d861d"/><rect x="1449.40" y="144.12" width="5.60" height="1.25" fill="#1d861d"/><rect x="1455.80" y="144.12" width="4.00" height="1.25" fill="#1d861d"/><rect x="1460.60" y="144.12" width="5.60" height="1.25" fill="#1d861d"/><rect x="1467.00" y="144.12" width="2.40" height="1.25" fill="#1d861d"/><rect x="1419.00" y="147.31" width="11.20" height="1.25" fill="#2f2fd0"/><rect x="1430.20" y="147.31" width="0.80" height="1.25" fill="#2457ec"/><rect x="1431.00" y="147.31" width="3.20" height="1.25" fill="#000000"/><rect x="1435.00" y="147.31" width="4.80" height="1.25" fill="#000000"/><rect x="1440.60" y="147.31" width="0.80" height="1.25" fill="#2457ec"/><rect x="1419.00" y="150.49" width="16.80" height="1.25" fill="#000000"/><rect x="1435.80" y="150.49" width="0.80" height="1.25" fill="#2457ec"/><rect x="1436.60" y="150.49" width="3.20" height="1.25" fill="#000000"/><rect x="1440.60" y="150.49" width="4.80" height="1.25" fill="#a31515"/><rect x="1445.40" y="150.49" width="0.80" height="1.25" fill="#2457ec"/><rect x="1419.00" y="152.07" width="19.20" height="1.25" fill="#000000"/><rect x="1438.20" y="152.07" width="0.80" height="1.25" fill="#2457ec"/><rect x="1439.00" y="152.07" width="3.20" height="1.25" fill="#000000"/><rect x="1443.00" y="152.07" width="4.00" height="1.25" fill="#a31515"/><rect x="1447.00" y="152.07" width="0.80" height="1.25" fill="#2457ec"/><rect x="1419.00" y="155.25" width="0.80" height="1.25" fill="#1d861d"/><rect x="1420.60" y="155.25" width="4.80" height="1.25" fill="#1d861d"/><rect x="1426.20" y="155.25" width="2.40" height="1.25" fill="#1d861d"/><rect x="1429.40" y="155.25" width="4.00" height="1.25" fill="#1d861d"/><rect x="1434.20" y="155.25" width="4.00" height="1.25" fill="#1d861d"/><rect x="1439.00" y="155.25" width="1.60" height="1.25" fill="#1d861d"/><rect x="1441.40" y="155.25" width="11.20" height="1.25" fill="#1d861d"/><rect x="1453.40" y="155.25" width="4.80" height="1.25" fill="#1d861d"/><rect x="1459.00" y="155.25" width="3.20" height="1.25" fill="#1d861d"/><rect x="1463.00" y="155.25" width="6.40" height="1.25" fill="#1d861d"/><rect x="1419.00" y="156.84" width="17.60" height="1.25" fill="#000000"/><rect x="1436.60" y="156.84" width="0.80" height="1.25" fill="#2457ec"/><rect x="1437.40" y="156.84" width="3.20" height="1.25" fill="#000000"/><rect x="1441.40" y="156.84" width="0.80" height="1.25" fill="#000000"/><rect x="1442.20" y="156.84" width="0.80" height="1.25" fill="#2457ec"/><rect x="1419.00" y="158.44" width="16.80" height="1.25" fill="#000000"/><rect x="1435.80" y="158.44" width="0.80" height="1.25" fill="#2457ec"/><rect x="1436.60" y="158.44" width="3.20" height="1.25" fill="#000000"/><rect x="1440.60" y="158.44" width="0.80" height="1.25" fill="#000000"/><rect x="1441.40" y="158.44" width="0.80" height="1.25" fill="#2457ec"/><rect x="1419.00" y="161.62" width="0.80" height="1.25" fill="#1d861d"/><rect x="1420.60" y="161.62" width="2.40" height="1.25" fill="#1d861d"/><rect x="1423.80" y="161.62" width="2.40" height="1.25" fill="#1d861d"/><rect x="1427.00" y="161.62" width="6.40" height="1.25" fill="#1d861d"/><rect x="1434.20" y="161.62" width="5.60" height="1.25" fill="#1d861d"/><rect x="1440.60" y="161.62" width="1.60" height="1.25" fill="#1d861d"/><rect x="1443.00" y="161.62" width="2.40" height="1.25" fill="#1d861d"/><rect x="1446.20" y="161.62" width="4.00" height="1.25" fill="#1d861d"/><rect x="1419.00" y="163.20" width="16.80" height="1.25" fill="#2f2fd0"/><rect x="1435.80" y="163.20" width="0.80" height="1.25" fill="#2457ec"/><rect x="1436.60" y="163.20" width="3.20" height="1.25" fill="#000000"/><rect x="1425.40" y="164.80" width="8.80" height="1.25" fill="#000000"/><rect x="1434.20" y="164.80" width="0.80" height="1.25" fill="#2457ec"/><rect x="1419.00" y="167.97" width="0.80" height="1.25" fill="#1d861d"/><rect x="1420.60" y="167.97" width="2.40" height="1.25" fill="#1d861d"/><rect x="1423.80" y="167.97" width="2.40" height="1.25" fill="#1d861d"/><rect x="1427.00" y="167.97" width="6.40" height="1.25" fill="#1d861d"/><rect x="1434.20" y="167.97" width="5.60" height="1.25" fill="#1d861d"/><rect x="1440.60" y="167.97" width="4.00" height="1.25" fill="#1d861d"/><rect x="1445.40" y="167.97" width="1.60" height="1.25" fill="#1d861d"/><rect x="1447.80" y="167.97" width="2.40" height="1.25" fill="#1d861d"/><rect x="1451.00" y="167.97" width="4.00" height="1.25" fill="#1d861d"/><rect x="1419.00" y="169.56" width="20.80" height="1.25" fill="#2f2fd0"/><rect x="1439.80" y="169.56" width="0.80" height="1.25" fill="#2457ec"/><rect x="1440.60" y="169.56" width="3.20" height="1.25" fill="#000000"/><rect x="1444.60" y="169.56" width="5.60" height="1.25" fill="#2f2fd0"/><rect x="1420.60" y="171.16" width="0.80" height="1.25" fill="#2f2fd0"/><rect x="1421.40" y="171.16" width="0.80" height="1.25" fill="#319331"/><rect x="1422.20" y="171.16" width="17.60" height="1.25" fill="#1a1a90"/><rect x="1439.80" y="171.16" width="0.80" height="1.25" fill="#319331"/><rect x="1420.60" y="172.75" width="0.80" height="1.25" fill="#2f2fd0"/><rect x="1421.40" y="172.75" width="0.80" height="1.25" fill="#319331"/><rect x="1422.20" y="172.75" width="17.60" height="1.25" fill="#1a1a90"/><rect x="1439.80" y="172.75" width="0.80" height="1.25" fill="#319331"/><rect x="1440.60" y="172.75" width="2.40" height="1.25" fill="#000000"/><rect x="1443.80" y="172.75" width="0.80" height="1.25" fill="#1d861d"/><rect x="1445.40" y="172.75" width="2.40" height="1.25" fill="#1d861d"/><rect x="1448.60" y="172.75" width="4.80" height="1.25" fill="#1d861d"/><rect x="1454.20" y="172.75" width="6.40" height="1.25" fill="#1d861d"/><rect x="1461.40" y="172.75" width="1.60" height="1.25" fill="#1d861d"/><rect x="1463.80" y="172.75" width="2.40" height="1.25" fill="#1d861d"/><rect x="1467.00" y="172.75" width="4.00" height="1.25" fill="#1d861d"/><rect x="1471.80" y="172.75" width="6.40" height="1.25" fill="#1d861d"/><rect x="1479.00" y="172.75" width="7.20" height="1.25" fill="#1d861d"/><rect x="1487.00" y="172.75" width="1.60" height="1.25" fill="#1d861d"/><rect x="1489.40" y="172.75" width="6.40" height="1.25" fill="#1d861d"/><rect x="1419.00" y="174.33" width="0.80" height="1.25" fill="#2457ec"/><rect x="1419.00" y="177.51" width="17.60" height="1.25" fill="#000000"/><rect x="1436.60" y="177.51" width="0.80" height="1.25" fill="#2457ec"/><rect x="1437.40" y="177.51" width="3.20" height="1.25" fill="#000000"/><rect x="1440.60" y="177.51" width="0.80" height="1.25" fill="#2457ec"/></g></svg><svg style="left:3px;top:6px" width="17" height="17" viewBox="0 0 100 100"><path fill="#1f9cf0" d="M96.46 10.8L75.86.87a6.23 6.23 0 0 0-7.1 1.2L29.35 38.04 12.17 25.01a4.16 4.16 0 0 0-5.32.24L1.34 30.26a4.17 4.17 0 0 0 0 6.15L16.23 50 1.33 63.6a4.17 4.17 0 0 0 0 6.14l5.52 5a4.16 4.16 0 0 0 5.32.24l17.18-13.040L68.77 97.9a6.22 6.22 0 0 0 7.1 1.2l20.6-9.9A6.25 6.25 0 0 0 100 83.6V16.4a6.25 6.25 0 0 0-3.54-5.6zM75.01 72.7L45.1 50l29.91-22.7v45.4z"/></svg><svg style="left:0;top:0" width="1514" height="806" viewBox="0 0 1514 806"><g fill="none" stroke="#ffffff" stroke-width="1.8" stroke-linejoin="round"><path d="M13.8 46.4 Q13.8 44.8 15.4 44.8 H23.2 L27.4 49 V59.2 Q27.4 60.8 25.8 60.8 H15.4 Q13.8 60.8 13.8 59.2 Z"/><path d="M13.8 50.9 H9.4 Q7.8 50.9 7.8 52.5 V65.2 Q7.8 66.8 9.4 66.8 H19.5 Q21.1 66.8 21.1 65.2 V60.8"/></g><path d="M22.8 45.4 V49.4 H26.8 Z" fill="#ffffff"/>
<g fill="none" stroke="#858585" stroke-width="1.6"><circle cx="20.8" cy="100.2" r="7.4"/><path d="M15.5 105.5 L7.6 114.4" stroke-linecap="round"/></g>
<g fill="none" stroke="#858585" stroke-width="1.5"><circle cx="12.6" cy="143.2" r="2.9"/><circle cx="12.6" cy="158.4" r="2.9"/><circle cx="23.7" cy="147.9" r="2.9"/><path d="M12.6 146.1 V155.5"/><path d="M23.7 150.8 C23.7 154.5 20 154.8 16 155.2 L12.6 155.6"/></g>
<g fill="none" stroke="#858585" stroke-width="1.5" stroke-linejoin="round"><path d="M14.3 188.2 L29.2 197.2 L19.5 203.2"/><path d="M14.3 188.2 V198.5"/><ellipse cx="11.8" cy="206" rx="3.6" ry="4.3"/><path d="M8.2 204 H6 M8.2 207.5 H6 M15.4 204 H17.6 M15.4 207.5 H17.6 M9.3 201.5 L7.2 199.6 M14.3 201.5 L16.4 199.6 M9 210 L7 211.5 M14.6 210 L16.6 211.5 M8.5 203.5 H15"/></g>
<g fill="none" stroke="#858585" stroke-width="1.4" stroke-linejoin="round"><rect x="6.7" y="239.8" width="9.6" height="18.2" rx="1.2"/><path d="M6.7 249 H24 M16.3 258 H24"/><rect x="20" y="235.6" width="9.4" height="8.6" rx="1.4"/></g>
<circle cx="26" cy="254.3" r="8.2" fill="#0b7fd4" stroke="#2c2c2c" stroke-width="1"/><path d="M24.4 253.2 L26.4 251.6 V258" fill="none" stroke="#fff" stroke-width="1.3"/>
<g fill="none" stroke="#858585" stroke-width="1.5" stroke-linejoin="round"><path d="M12.6 284.5 H24"/><path d="M14.9 284.6 V291.8 L9.4 303.6 H27.2 L21.8 291.8 V284.6"/><path d="M11.8 298 H24.8"/></g>
<g fill="none" stroke="#858585" stroke-width="1.4" stroke-linejoin="round"><path d="M16.4 330.8 L6.6 351.6 H27 Z"/><path d="M16.4 330.8 L15.8 344.6 L8.6 348.6 M15.8 344.6 L22.5 348.5"/></g>
<g fill="none" stroke-linecap="round"><path d="M16.4 353 L24.3 344.8" stroke="#2c2c2c" stroke-width="4.6"/><path d="M16.4 353 L24.3 344.8" stroke="#858585" stroke-width="2.4"/><circle cx="26.5" cy="342.5" r="3.6" stroke="#2c2c2c" stroke-width="3"/><path d="M29.6 341.2 A3.3 3.3 0 1 1 27.8 339.4" stroke="#858585" stroke-width="1.7"/></g>
<g fill="none" stroke="#858585" stroke-width="1.4"><rect x="10.8" y="380" width="13.8" height="21.6" rx="1.8"/><circle cx="17.7" cy="380.3" r="2.2" fill="#2c2c2c"/><circle cx="17.7" cy="391.3" r="2.3"/><path d="M10.8 384.5 H13 M10.8 388 H13 M10.8 391.5 H13 M10.8 395 H13 M10.8 398.5 H13 M24.6 384.5 H22.4 M24.6 388 H22.4 M24.6 391.5 H22.4 M24.6 395 H22.4 M24.6 398.5 H22.4"/></g>
<g><path fill="#767676" d="M9.4 438.2 C9.4 434.8 12.5 433.4 17.6 433.4 C22.8 433.4 26 434.8 26 438.2 C26 441.6 21.2 446 17.7 446 C14.2 446 9.4 441.6 9.4 438.2 Z"/><path fill="#8a8a8a" d="M8.3 432.6 C10.5 430.2 14 429.8 16.2 431.6 L17.6 434 C15 432.8 11.8 432.4 8.3 432.6 Z"/><path fill="#8a8a8a" d="M17 434 C18.5 431 21 429.6 24.2 428.8 C22.8 431 21 433.5 18.6 434.6 Z"/><path fill="none" stroke="#5a5a5a" stroke-width="0.6" d="M11 437 L24.5 443 M11 441.5 L23 436 M14 435 L21.5 445 M17.5 434.5 L13 444.5 M21 434.5 L25 440"/></g>
<g fill="none" stroke="#858585" stroke-width="1.5"><circle cx="18" cy="715" r="11.4"/><circle cx="18" cy="711.2" r="4.6"/><path d="M10.2 723.8 C11.2 719.5 14 717.6 18 717.6 C22 717.6 24.8 719.5 25.8 723.8"/></g>
<g fill="none" stroke="#858585" stroke-width="1.5" stroke-linejoin="round"><polygon points="24.60,760.70 28.97,760.80 28.97,765.40 24.60,765.50 24.25,766.35 27.27,769.51 24.01,772.77 20.85,769.75 20.00,770.10 19.90,774.47 15.30,774.47 15.20,770.10 14.35,769.75 11.19,772.77 7.93,769.51 10.95,766.35 10.60,765.50 6.23,765.40 6.23,760.80 10.60,760.70 10.95,759.85 7.93,756.69 11.19,753.43 14.35,756.45 15.20,756.10 15.30,751.73 19.90,751.73 20.00,756.10 20.85,756.45 24.01,753.43 27.27,756.69 24.25,759.85"/><circle cx="17.6" cy="763.1" r="2.4"/></g>
<g fill="none" stroke="#424242" stroke-width="1.1"><path d="M444 14.9 H455 M448.8 10.2 L444 14.9 L448.8 19.6" stroke="#a8a8a8"/><path d="M469.5 14.9 H480.5 M475.7 10.2 L480.5 14.9 L475.7 19.6" stroke="#a8a8a8"/></g>
<g fill="none" stroke="#5a5a5a" stroke-width="1.2"><circle cx="733.6" cy="10.6" r="4.1"/><path d="M730.6 13.6 L725.2 19.8"/></g>
<g fill="none" stroke="#424242" stroke-width="1.1"><rect x="1287.9" y="8" width="13" height="13" rx="1.2"/><rect x="1313.8" y="8" width="13" height="13" rx="1.2"/><rect x="1339.3" y="8" width="13" height="13" rx="1.2"/><path d="M1346.6 8 V21"/><rect x="1365.8" y="8" width="5.5" height="13" rx="1.2"/><rect x="1373.3" y="8.2" width="5.2" height="5" rx="1.8"/><rect x="1373.3" y="15.8" width="5.2" height="5" rx="1.8"/></g>
<rect x="1288.5" y="8.5" width="6" height="12" fill="#424242"/><rect x="1314.3" y="16.2" width="12" height="4.3" fill="#424242"/>
<g fill="none" stroke="#333" stroke-width="1"><path d="M1403.5 14.5 H1414"/><rect x="1448.3" y="11.8" width="8.2" height="7.6" rx="1"/><path d="M1450.6 11.8 V10.8 Q1450.6 9.8 1451.6 9.8 H1457.5 Q1458.5 9.8 1458.5 10.8 V16.4 Q1458.5 17.4 1457.5 17.4 H1456.5"/><path d="M1494 9.2 L1504.5 19.7 M1504.5 9.2 L1494 19.7"/></g>
<g fill="none" stroke="#424242" stroke-width="1.1"><rect x="1467.6" y="42.9" width="12.6" height="11.8" rx="1"/><path d="M1473.9 42.9 V54.7"/></g>
<g fill="#424242"><circle cx="1494.2" cy="49.6" r="1"/><circle cx="1499.2" cy="49.6" r="1"/><circle cx="1504.2" cy="49.6" r="1"/></g>
<g fill="#424242"><circle cx="268.4" cy="49.4" r="1"/><circle cx="273.6" cy="49.4" r="1"/><circle cx="278.8" cy="49.4" r="1"/></g>
<g fill="none" stroke="#616161" stroke-width="1.1"><path d="M47.20 75.40 L52.00 80.20 L56.80 75.40"/><path d="M47.20 119.40 L52.00 124.20 L56.80 119.40"/><path d="M60.20 141.00 L65.00 145.80 L69.80 141.00"/><path d="M70.70 160.90 L75.30 165.50 L70.70 170.10"/><path d="M70.70 182.90 L75.30 187.50 L70.70 192.10"/><path d="M49.90 749.20 L54.50 753.80 L49.90 758.40"/><path d="M49.90 771.80 L54.50 776.40 L49.90 781.00"/></g>
<g fill="none" stroke="#424242" stroke-width="1.1"><path d="M69.2 95.8 L77.6 104.2 M77.6 95.8 L69.2 104.2"/></g>
<path fill="#519aba" d="M87.5 103.4 V94.2 H90.162 L93.0 99.26 L95.838 94.2 H98.5 V103.4 H96.08 V97.696 L93.726 102.48 H92.274 L89.92 97.696 V103.4 Z"/>
<path fill="#519aba" d="M66.2 213.39999999999998 V204.2 H68.81360000000001 L71.60000000000001 209.26 L74.3864 204.2 H77.0 V213.39999999999998 H74.624 V207.696 L72.31280000000001 212.48 H70.8872 L68.57600000000001 207.696 V213.39999999999998 Z"/>
<path fill="#519aba" d="M310.8 53.4 V44 H313.3168 L316.0 49.17 L318.6832 44 H321.2 V53.4 H318.912 V47.572 L316.6864 52.46 H315.3136 L313.088 47.572 V53.4 Z"/>
<path fill="#519aba" d="M353.7 82.4 V73.2 H356.2168 L358.9 78.26 L361.5832 73.2 H364.09999999999997 V82.4 H361.81199999999995 V76.696 L359.58639999999997 81.48 H358.2136 L355.988 76.696 V82.4 Z"/>
<g stroke="#b0b0b0" stroke-width="1.1"><path d="M69.2 226 H77 M69.2 228.7 H75 M69.2 231.4 H77 M69.2 234 H74"/></g>
<text x="66.6" y="257.8" font-family="Liberation Sans" font-weight="bold" font-size="13.2" fill="#519aba">C</text>
<g fill="none" stroke="#424242" stroke-width="1.1"><path d="M417.2 45.4 L425.6 53.8 M425.6 45.4 L417.2 53.8"/></g>
<g fill="none" stroke="#8a8a8a" stroke-width="1"><path d="M339.3 74.8 L344 79.2 L339.3 83.6"/></g>
<g stroke="#d3d3d3" stroke-width="1"><path d="M364.5 134.4 V153.3 M364.5 172.3 V191.2 M364.5 304.8 V323.7"/></g>
<g fill="none" stroke="#eeeeee" stroke-width="2"><rect x="364.6" y="362.5" width="1047" height="18.5"/></g>
<rect x="565.2" y="658" width="54.8" height="1.2" fill="#424242"/>
<g fill="none" stroke="#424242" stroke-width="1.1" stroke-linejoin="round"><path d="M1268.5 640.8 H1282 L1280.5 654.3 H1267 Z"/><path d="M1270.5 645 L1273.6 647.3 L1270.5 649.6 M1274 651.5 H1278"/><path d="M1356.3 640.8 V653.4 M1350 647.1 H1362.6"/><path d="M1369.3 645.8 L1372.7 649.2 L1376.1 645.8"/><rect x="1390.3" y="640.8" width="12.2" height="12.6" rx="1"/><path d="M1396.4 640.8 V653.4"/><path d="M1415.8 643.2 H1426.6 M1419.2 643 V641 H1423.2 V643 M1417 643.2 L1417.6 654 H1424.8 L1425.4 643.2 M1419.6 645.5 V651.8 M1421.2 645.5 V651.8 M1422.8 645.5 V651.8"/><path d="M1469 650 L1473.6 645.4 L1478.2 650"/><path d="M1495 643.2 L1503.6 651.8 M1503.6 643.2 L1495 651.8"/></g>
<g fill="#424242"><circle cx="1441.8" cy="647.4" r="1"/><circle cx="1447.4" cy="647.4" r="1"/><circle cx="1453" cy="647.4" r="1"/></g>
<path d="M1509.5 89 V629" stroke="#ececec" stroke-width="1"/>
<path d="M1509.5 681 V787" stroke="#e3e3e3" stroke-width="1"/>
<rect x="1509" y="243" width="5" height="2" fill="#555"/>
<g fill="none" stroke="#fff" stroke-width="1.2"><path d="M6.8 794.4 L10.8 798.3 L6.4 802.9"/><path d="M15.8 791.2 L12.2 794.6 L15.4 797.9"/></g>
<g fill="none" stroke="#fff" stroke-width="1.2"><circle cx="43" cy="797.4" r="6"/><path d="M40.4 794.8 L45.6 800 M45.6 794.8 L40.4 800"/><path d="M70 791.5 L76 803 H64 Z" stroke-linejoin="round"/><path d="M70 795.5 V799.5 M70 800.8 V802"/><path d="M108.2 800 L110 795 L111.8 800 M107.5 803 L110 798 L112.5 803 M107 794.5 Q105 797.2 107 800 M113 794.5 Q115 797.2 113 800 M105.3 792.6 Q102.2 797.2 105.3 801.8 M114.7 792.6 Q117.8 797.2 114.7 801.8"/><circle cx="110" cy="796" r="1" fill="#fff"/></g>
<g fill="none" stroke="#fff" stroke-width="1.1"><rect x="1190.5" y="791.5" width="9.6" height="11" rx="0.8"/><path d="M1193 794 H1197.5 M1193 796.5 H1194.3 M1196.3 796.5 H1197.5 M1193 799 H1194.3 M1196.3 799 H1197.5 M1193 801 H1194.3 M1196.3 801 H1197.5"/><path d="M1266.6 791.8 L1276.2 797.3 L1266.6 802.8 Z" stroke-linejoin="round"/><path d="M1495.5 801 H1507.5 M1497 801 V796.5 Q1497 791.5 1501.5 791.5 Q1506 791.5 1506 796.5 V801 M1499.6 803 H1503.4"/></g>
<circle cx="1505.8" cy="792.6" r="2.6" fill="#fff"/>
<rect x="358.3" y="359.3" width="370" height="24.4" fill="none" stroke="#e53a3a" stroke-width="2.7"/>
<polygon fill="#f23b3b" points="739.2,373.6 747.9,357.7 750.5,360.8 795.8,331.5 755.6,366.6 757.6,369.7"/></svg>
</body></html>
